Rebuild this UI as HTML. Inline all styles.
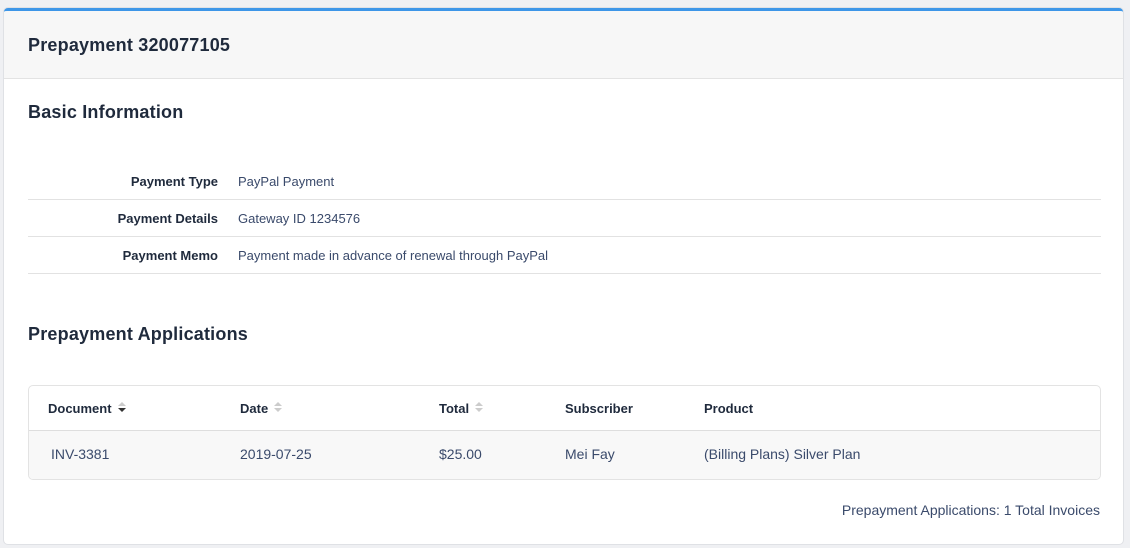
<!DOCTYPE html>
<html><head><style>
body{margin:0;background:#eff0f3;font-family:"Liberation Sans",sans-serif;color:#1f2a3c;width:1130px;height:548px;overflow:hidden;position:relative}
.card{position:absolute;left:4px;top:8px;width:1119px;height:533px;background:#fff;border-radius:4px;border-top:3px solid #3d96e8;box-shadow:0 0 0 1px #dfe1e5;overflow:hidden}
.hdr{height:67px;background:#f7f7f7;border-bottom:1px solid #e3e3e3;position:relative}
.hdr h1{position:absolute;left:24px;top:24px;margin:0;font-size:18px;font-weight:bold;letter-spacing:0.2px}
h2{position:absolute;left:24px;margin:0;font-size:18px;font-weight:bold;letter-spacing:0.2px}
.row{position:absolute;left:24px;width:1073px;height:36px;border-bottom:1px solid #e2e2e2;font-size:13px}
.row .k{position:absolute;right:883px;top:11px;font-weight:bold;white-space:nowrap}
.row .v{position:absolute;left:210px;top:11px;color:#3a4a6b;white-space:nowrap}
.tbl{position:absolute;left:24px;top:374px;width:1071px;height:93px;border:1px solid #e3e3e3;border-radius:5px;overflow:hidden}
.th{position:absolute;top:15px;font-size:13px;font-weight:bold}
.body{position:absolute;left:0;top:44px;width:100%;height:49px;background:#f8f8f8;border-top:1px solid #dedede}
.td{position:absolute;top:15px;font-size:14px;color:#3a4a6b}
.s{display:inline-block;margin-left:6px;vertical-align:middle;position:relative;width:8px;height:12px;top:-2px}
.s:before,.s:after{content:"";position:absolute;left:0;border-left:4px solid transparent;border-right:4px solid transparent}
.s:before{top:0;border-bottom:4px solid #ccc}
.s:after{top:6px;border-top:4px solid #ccc}
.s.d:after{border-top-color:#333}
.foot{position:absolute;right:23px;top:491px;font-size:14px;color:#3a4a6b}
</style></head><body>
<div class="card">
<div class="hdr"><h1>Prepayment 320077105</h1></div>
<h2 style="top:91px">Basic Information</h2>
<div class="row" style="top:152px"><span class="k">Payment Type</span><span class="v">PayPal Payment</span></div>
<div class="row" style="top:189px"><span class="k">Payment Details</span><span class="v">Gateway ID 1234576</span></div>
<div class="row" style="top:226px"><span class="k">Payment Memo</span><span class="v">Payment made in advance of renewal through PayPal</span></div>
<h2 style="top:313px">Prepayment Applications</h2>
<div class="tbl">
<div class="th" style="left:19px">Document<span class="s d"></span></div>
<div class="th" style="left:211px">Date<span class="s"></span></div>
<div class="th" style="left:410px">Total<span class="s"></span></div>
<div class="th" style="left:536px">Subscriber</div>
<div class="th" style="left:675px">Product</div>
<div class="body">
<div class="td" style="left:22px">INV-3381</div>
<div class="td" style="left:211px">2019-07-25</div>
<div class="td" style="left:410px">$25.00</div>
<div class="td" style="left:536px">Mei Fay</div>
<div class="td" style="left:675px">(Billing Plans) Silver Plan</div>
</div>
</div>
<div class="foot">Prepayment Applications: 1 Total Invoices</div>
</div>
</body></html>
